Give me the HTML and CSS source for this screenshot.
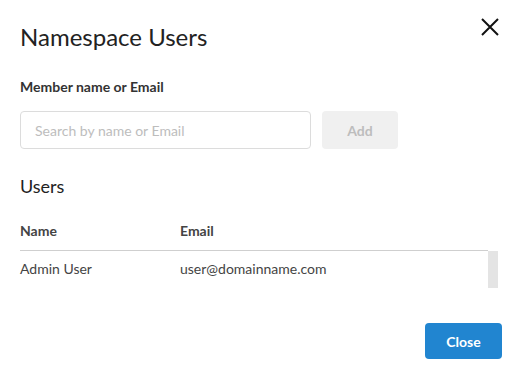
FILE: index.html
```html
<!DOCTYPE html>
<html lang="en">
<head>
    <meta charset="UTF-8">
    <meta name="viewport" content="width=device-width, initial-scale=1.0">
    <title>Namespace Users</title>
    <link rel="stylesheet" href="styles.css">
</head>
<body>
<div class="modal">
    <div class="modal-header">
        <h1 class="title">Namespace Users</h1>
        <button class="close-x" aria-label="Close">
            <svg width="18" height="18" viewBox="0 0 18 18">
                <path d="M1 1 L17 17 M17 1 L1 17" stroke="#111" stroke-width="2" fill="none"/>
            </svg>
        </button>
    </div>

    <label class="field-label" for="member">Member name or Email</label>
    <div class="add-row">
        <input type="text" id="member" class="search" placeholder="Search by name or Email">
        <button class="add-btn" disabled>Add</button>
    </div>

    <h2 class="subtitle">Users</h2>

    <div class="users">
        <div class="users-table">
            <div class="row head">
                <div class="col-name">Name</div>
                <div class="col-email">Email</div>
            </div>
            <div class="body">
                <div class="list">
                    <div class="row">
                        <div class="col-name">Admin User</div>
                        <div class="col-email">user@domainname.com</div>
                    </div>
                </div>
                <div class="scroll-track"></div>
            </div>
        </div>
    </div>

    <div class="actions">
        <button class="close-btn">Close</button>
    </div>
</div>
</body>
</html>
```

FILE: styles.css
```css
* {
    box-sizing: border-box;
    margin: 0;
    padding: 0;
}
body {
    font-family: Lato, "Open Sans", sans-serif;
    background: #fff;
    color: #333;
}
.modal {
    width: 517px;
    height: 370px;
    padding: 18px 16px 0 20px;
}
.modal-header {
    display: flex;
    justify-content: space-between;
    align-items: flex-start;
}
.title {
    font-size: 24px;
    font-weight: 400;
    line-height: 28px;
    color: #222;
    margin-top: 5px;
}
.close-x {
    border: none;
    background: none;
    width: 18px;
    height: 18px;
    margin-right: 2px;
    cursor: pointer;
}
.close-x svg {
    display: block;
}
.field-label {
    display: block;
    font-size: 14px;
    font-weight: 700;
    line-height: 20px;
    color: #333;
    margin-top: 26px;
}
.add-row {
    display: flex;
    gap: 11px;
    margin-top: 14px;
}
.search {
    width: 291px;
    height: 38px;
    border: 1px solid #dcdcdc;
    border-radius: 4px;
    padding-left: 14px;
    font-family: Lato, sans-serif;
    font-size: 14px;
    outline: none;
}
.search::placeholder {
    color: #bdbdbd;
}
.add-btn {
    width: 76px;
    height: 38px;
    border: none;
    border-radius: 4px;
    background: #f0f0f0;
    color: #bdbdbd;
    font-family: Lato, sans-serif;
    font-size: 14px;
    font-weight: 700;
}
.subtitle {
    font-size: 18px;
    font-weight: 400;
    line-height: 22px;
    color: #222;
    margin-top: 26px;
}
.users {
    margin-top: 14px;
    width: 478px;
}
.row {
    display: flex;
    font-size: 14px;
    line-height: 20px;
    color: #444;
}
.row.head {
    font-weight: 700;
    padding: 10px 0 9px;
    border-bottom: 1px solid #cfcfcf;
    width: 468px;
}
.col-name {
    width: 160px;
}
.body {
    display: flex;
}
.list {
    flex: 1;
}
.list .row {
    padding: 8px 0 9px;
}
.scroll-track {
    width: 10px;
    height: 37px;
    background: #e4e4e4;
}
.actions {
    display: flex;
    justify-content: flex-end;
    margin-top: 35px;
    margin-right: -1px;
}
.close-btn {
    width: 77px;
    height: 36px;
    border: none;
    border-radius: 4px;
    background: #2185d0;
    color: #fff;
    font-family: Lato, sans-serif;
    font-size: 14px;
    font-weight: 700;
}
```
